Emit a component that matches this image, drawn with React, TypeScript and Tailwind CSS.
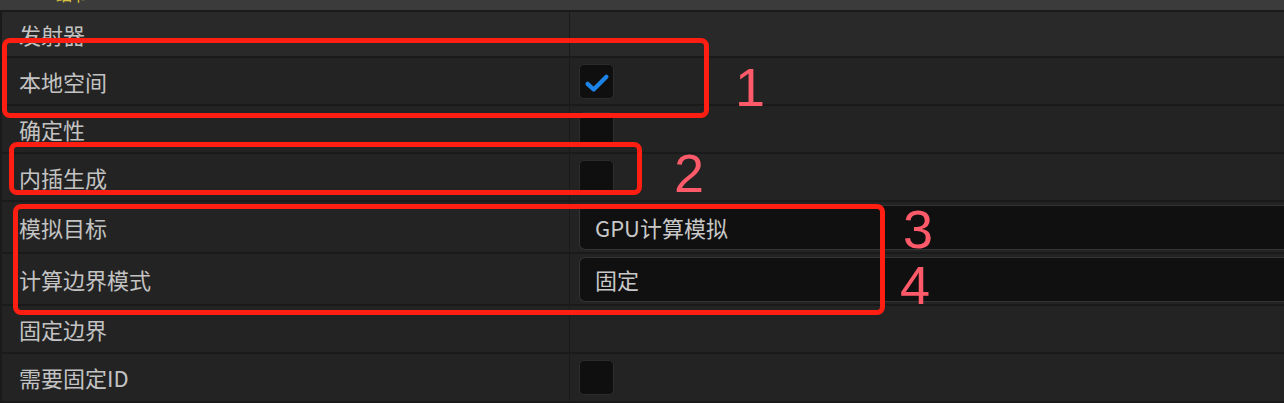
import React from "react";

const FONT = { fontFamily: '"Noto Sans CJK SC", "Noto Sans", sans-serif' };
const NUM = { fontFamily: '"Liberation Sans", Arial, sans-serif' };

function Checkbox({ checked }: { checked?: boolean }) {
  return (
    <div className="w-[35px] h-[35px] rounded-[5px] bg-[#0f0f0f] border border-[#2c2c2c] flex items-center justify-center">
      {checked && (
        <svg width="35" height="35" viewBox="0 0 35 35">
          <path d="M8 20 L14.5 26 L28 12.5" fill="none" stroke="#1c84e8" strokeWidth="4.5" strokeLinecap="round" strokeLinejoin="round" />
        </svg>
      )}
    </div>
  );
}

function Dropdown({ text }: { text: string }) {
  return (
    <div className="flex-1 h-[45px] rounded-l-[6px] bg-[#101010] border border-r-0 border-[#343434] flex items-center pl-[15px] text-[22px] text-[#c8c8c8]">
      {text}
    </div>
  );
}

type Row = { label: string; h: string; kind?: "check" | "checked" | "drop"; value?: string; cat?: boolean };

const rows: Row[] = [
  { label: "发射器", h: "h-[46px]", cat: true },
  { label: "本地空间", h: "h-[48px]", kind: "checked" },
  { label: "确定性", h: "h-[48px]", kind: "check" },
  { label: "内插生成", h: "h-[48px]", kind: "check" },
  { label: "模拟目标", h: "h-[52px]", kind: "drop", value: "GPU计算模拟" },
  { label: "计算边界模式", h: "h-[52px]", kind: "drop", value: "固定" },
  { label: "固定边界", h: "h-[48px]" },
  { label: "需要固定ID", h: "h-[49px]", kind: "check" },
];

export default function App() {
  return (
    <div className="relative w-[1284px] h-[403px] overflow-hidden bg-[#1b1b1b] flex flex-col" style={FONT}>
      <div className="h-[10px] shrink-0 bg-[#3b3b3b] overflow-hidden">
        <div className="ml-[56px] -mt-[14px] text-[16px] leading-none text-[#d9c23e]">细节</div>
      </div>
      <div className="h-[2px] shrink-0 bg-[#1a1a1a]" />
      {rows.map((r, i) => (
        <div key={i} className={`flex shrink-0 ${r.h} border-b-2 border-[#1a1a1a] ${r.cat ? "bg-[#292929]" : "bg-[#232323]"}`}>
          <div className="w-[570px] shrink-0 border-l-2 border-r border-[#1a1a1a] flex items-center pl-[17px] text-[22px] text-[#c3c3c3]">
            {r.label}
          </div>
          <div className="flex-1 flex items-center pl-[9px]">
            {r.kind === "checked" && <Checkbox checked />}
            {r.kind === "check" && <Checkbox />}
            {r.kind === "drop" && <Dropdown text={r.value || ""} />}
          </div>
        </div>
      ))}

      <div className="absolute left-[2px] top-[38px] w-[707px] h-[80px] border-[5px] border-[#fe1e12] rounded-[8px]" />
      <div className="absolute left-[9px] top-[142px] w-[633px] h-[53px] border-[5px] border-[#fe1e12] rounded-[8px]" />
      <div className="absolute left-[13px] top-[204px] w-[872px] h-[111px] border-[5px] border-[#fe1e12] rounded-[8px]" />

      <div className="absolute left-[735px] top-[60px] text-[54px] leading-none text-[#ff5a6a]" style={NUM}>1</div>
      <div className="absolute left-[674px] top-[146px] text-[54px] leading-none text-[#ff5a6a]" style={NUM}>2</div>
      <div className="absolute left-[903px] top-[202px] text-[54px] leading-none text-[#ff5a6a]" style={NUM}>3</div>
      <div className="absolute left-[900px] top-[258px] text-[54px] leading-none text-[#ff5a6a]" style={NUM}>4</div>
    </div>
  );
}
